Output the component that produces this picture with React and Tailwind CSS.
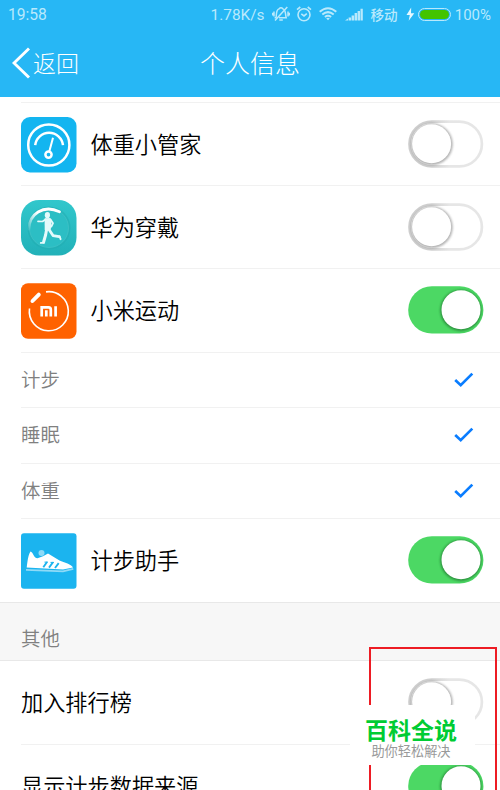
import React from "react";

const CJK = "font-['Noto_Sans_CJK_SC',sans-serif]";

function Toggle({ on }) {
  return (
    <svg width="76" height="48" viewBox="0 0 76 48" className="mb-px shrink-0">
      <defs>
        <filter id="knobShadow" x="-20%" y="-20%" width="140%" height="140%">
          <feGaussianBlur stdDeviation="1.1" />
        </filter>
        <linearGradient id="trackShade" x1="0" y1="0" x2="1" y2="0">
          <stop offset="0" stopColor="#cfcfcf" />
          <stop offset=".3" stopColor="#cfcfcf" />
          <stop offset=".55" stopColor="#e6e6e6" />
          <stop offset="1" stopColor="#e6e6e6" />
        </linearGradient>
      </defs>
      {on ? (
        <>
          <rect x="0.2" y="0.3" width="75.2" height="47.3" rx="23.65" fill="#4cd864" />
          <circle cx="52.8" cy="24.3" r="20.6" fill="#247a32" opacity=".75" filter="url(#knobShadow)" />
          <circle cx="53" cy="23.8" r="19.5" fill="#fff" />
        </>
      ) : (
        <>
          <rect x="1.5" y="1.6" width="72.4" height="44.8" rx="22.4" fill="#fff" stroke="url(#trackShade)" strokeWidth="2.7" />
          <circle cx="23.8" cy="24.2" r="20.9" fill="#888" opacity=".65" filter="url(#knobShadow)" />
          <circle cx="23.6" cy="23.8" r="19.5" fill="#fff" />
        </>
      )}
    </svg>
  );
}

function Check() {
  return (
    <svg width="20" height="16" viewBox="0 0 20 16" className="mb-px mr-[10px]">
      <path d="M1.2 8.1 L6.7 13.2 L18.3 1.6" fill="none" stroke="#0a7dff" strokeWidth="2.7" />
    </svg>
  );
}

function ScaleIcon() {
  return (
    <svg width="56" height="56" viewBox="0 0 56 56" className="mt-px">
      <rect width="55.5" height="55.5" rx="9" fill="#13b5f0" />
      <g fill="none" stroke="#fff" strokeWidth="2.5">
        <circle cx="27.8" cy="28" r="20.6" />
        <path d="M14.2 28.2 A14 14 0 0 1 42 28.2" />
        <circle cx="27.5" cy="37.6" r="3.1" />
        <path d="M28.3 34.5 L32 20.8" strokeWidth="2" />
      </g>
    </svg>
  );
}

function RunnerIcon() {
  return (
    <svg width="56" height="56" viewBox="0 0 56 56" className="mt-px">
      <defs>
        <linearGradient id="teal" x1="0" y1="0" x2="0" y2="1">
          <stop offset="0" stopColor="#31c7cc" />
          <stop offset="1" stopColor="#22b1b8" />
        </linearGradient>
        <linearGradient id="ring" x1="0" y1="1" x2="1" y2="0">
          <stop offset="0" stopColor="#fff" stopOpacity=".1" />
          <stop offset=".55" stopColor="#fff" />
        </linearGradient>
      </defs>
      <rect width="55.5" height="55.5" rx="18" fill="url(#teal)" />
      <circle cx="28" cy="28" r="21.5" fill="#22adb3" opacity=".6" />
      <circle cx="28" cy="28" r="19.5" fill="#2cbec4" stroke="#48c5ca" strokeWidth=".6" />
      <path d="M8 29 C8 14.5 22 4 38.5 11.7" fill="none" stroke="url(#ring)" strokeWidth="2.8" strokeLinecap="round" />
      <g fill="#e4fafb">
        <ellipse cx="26.4" cy="15.2" rx="2.6" ry="3.1" />
        <path d="M23.6 18.3 L29.2 18 L30.6 20.5 L29.8 29.5 L23.7 30 Z" />
      </g>
      <g fill="none" stroke="#e4fafb" strokeLinejoin="round" strokeLinecap="round">
        <path d="M24.5 19.5 L21.5 21.5 L17 21.3" strokeWidth="1.7" />
        <path d="M29.5 19.5 L32 23.2 L30.3 26.6" strokeWidth="1.9" />
        <path d="M25.6 29.5 L24.6 35 L22.6 42" strokeWidth="3" />
        <path d="M28 29.5 L32 35.6 L38.2 36.6" strokeWidth="2.8" />
        <path d="M38.6 36.5 L39.6 39.2 M22.8 42.9 H19.8" strokeWidth="1.9" />
      </g>
    </svg>
  );
}

function MiIcon() {
  return (
    <svg width="56" height="56" viewBox="0 0 56 56">
      <rect y=".3" width="55.5" height="55.5" rx="7" fill="#ff6200" />
      <g fill="none" stroke="#fff">
        <path d="M25 8.9 A19.5 19.5 0 1 1 8.5 25.5" strokeWidth="1.6" />
        <path d="M11.5 18 L17.8 11.6" strokeWidth="3.9" strokeLinecap="round" />
        <path d="M20.7 33.4 V24.4 H27.5 Q29.8 24.4 29.8 26.8 V33.4 M25.3 27.2 V33.4 M34.6 23.3 V33.4" strokeWidth="2.7" />
      </g>
    </svg>
  );
}

function ShoeIcon() {
  return (
    <svg width="56" height="56" viewBox="0 0 56 56" className="mt-px">
      <rect y=".2" width="55.5" height="55.5" rx="3" fill="#1bb4ef" />
      <circle cx="20.5" cy="20" r="3" fill="#8edaf7" />
      <path d="M9.5 18.5 C7 22 6.5 29 5.7 34.5 L42 36.5 L52 34.5 C51 31.5 43 29.2 38.5 27.5 L27 20.5 L22 23.3 L16.5 25.3 C12.5 24.8 12.2 19.3 9.5 18.5 Z" fill="#fff" />
      <path d="M5 36.8 L42 38.3 L52.3 35.8" fill="none" stroke="#8edaf7" strokeWidth="1.8" />
      <path d="M22.3 34.2 L26 29 M28 34.6 L32 29.3 M34 35 L37.7 30.2" stroke="#1bb4ef" strokeWidth="1.9" fill="none" />
      <path d="M23.5 29.1 H27 M29.5 29.4 H33" stroke="#1bb4ef" strokeWidth="1" />
    </svg>
  );
}

function Row({ icon, label, on, size }) {
  return (
    <div className={`ml-[21px] flex items-center border-t border-[#f1f1f1] pr-4 ${size}`}>
      {icon}
      <span className={`mb-[3px] flex-1 whitespace-nowrap text-[22.2px] font-[350] leading-[32px] text-black ${icon ? "pl-[13.5px]" : ""}`}>{label}</span>
      <Toggle on={on} />
    </div>
  );
}

function CheckRow({ label, size }) {
  return (
    <div className={`ml-[21px] flex items-center justify-between border-t border-[#f1f1f1] pr-4 ${size}`}>
      <span className="mb-[3px] text-[19.4px] font-[350] leading-7 text-[#808080]">{label}</span>
      <Check />
    </div>
  );
}

function StatusBar() {
  return (
    <div className="flex h-[29px] items-center pl-[8px] pr-[9px] text-[#b9e9fc]">
      <span className="font-[Roboto,sans-serif] text-[15.6px] leading-5">19:58</span>
      <span className="ml-auto font-[Roboto,sans-serif] text-[15.4px] leading-5">1.78K/s</span>
      <svg width="18" height="18" viewBox="0 0 18 18" className="mb-[2px] ml-[7px]" fill="none" stroke="currentColor" strokeWidth="1.5">
        <path d="M2.6 12.8 H4 C4.8 9 3.8 5 7 3.9 Q9 1.5 11 3.9 C14 5 13.2 9 14.2 12.8 H7 M7.3 15 H10.8" />
        <path d="M15.3 2 L3 15.5 M2 6.4 V11.5 M16 6.4 V11.5 M.7 7.8 V10.6 M17.3 7.8 V10.6" />
      </svg>
      <svg width="16" height="18" viewBox="0 0 16 18" className="mb-[2px] ml-[6px]" fill="none" stroke="currentColor" strokeWidth="1.6">
        <circle cx="8" cy="9.8" r="6" />
        <path d="M1 4.6 L4.3 2 M11.7 2 L15 4.6 M5.3 8.9 L8 10.9 L10.8 8.7" />
      </svg>
      <svg width="18" height="14" viewBox="0 0 18 14" className="mb-px ml-[7px]" fill="none" stroke="currentColor" strokeWidth="2">
        <path d="M.7 4.8 Q9 -2.3 17.3 4.8 M3.3 7.5 Q9 2.7 14.7 7.5 M5.9 10 Q9 7.6 12.1 10" />
        <path d="M7.2 11.2 L9 13.3 L10.8 11.2 Q9 10.1 7.2 11.2 Z" fill="currentColor" stroke="none" />
      </svg>
      <svg width="18" height="13" viewBox="0 0 18 13" className="ml-[8px]" fill="currentColor">
        <path d="M0 12.5 L3 10.5 V12.5 Z M3.6 9.5 H6.1 V12.5 H3.6 Z M6.6 7.4 H9.1 V12.5 H6.6 Z M9.6 5 H12.1 V12.5 H9.6 Z M12.6 3 H15 V12.5 H12.6 Z M15.5 .7 H17.8 V12.5 H15.5 Z" />
      </svg>
      <span className="mb-[2px] ml-[8px] text-[13.6px] font-medium leading-5">移动</span>
      <svg width="9" height="15" viewBox="0 0 9 15" className="ml-[8px]" fill="#e5f8ff">
        <path d="M5.2 .6 L.5 8 H3.8 L2.7 13.8 L8.3 6.2 H5 Z" />
      </svg>
      <div className="mb-px ml-[3px] h-[13px] w-[33px] rounded-full border-[1.5px] border-[#b9e9fc] p-px">
        <div className="h-full rounded-full bg-[#43c400]" />
      </div>
      <span className="ml-[4px] font-[Roboto,sans-serif] text-[15px] leading-5">100%</span>
    </div>
  );
}

export default function App() {
  return (
    <div className={`relative flex h-[790px] w-[500px] flex-col overflow-hidden bg-white ${CJK} *:shrink-0`}>
      <header className="h-[97px] bg-[#27b7f5] text-white">
        <StatusBar />
        <div className="grid h-[68px] grid-cols-[1fr_auto_1fr] items-center">
          <div className="flex items-center pl-3">
            <svg width="19" height="32" viewBox="0 0 19 32" fill="none" stroke="white" strokeWidth="2.9">
              <path d="M17 1.5 L2 16 L17 30.5" />
            </svg>
            <span className="mb-[2px] ml-[2px] text-[23px] font-light leading-8">返回</span>
          </div>
          <h1 className="mb-[2px] text-[25px] font-light leading-8">个人信息</h1>
          <div />
        </div>
      </header>
      <main className="pt-[5px]">
        <Row icon={<ScaleIcon />} label="体重小管家" size="h-[83px]" />
        <Row icon={<RunnerIcon />} label="华为穿戴" size="h-[83px]" />
        <Row icon={<MiIcon />} label="小米运动" on size="h-[84px]" />
        <CheckRow label="计步" size="h-[55px]" />
        <CheckRow label="睡眠" size="h-[56px]" />
        <CheckRow label="体重" size="h-[55px]" />
        <Row icon={<ShoeIcon />} label="计步助手" on size="h-[84px]" />
        <h2 className="flex h-[59px] items-center border-y border-[#e8e8e8] bg-[#f7f7f7] pl-[21px] pt-[13px] text-[19.4px] font-[350] leading-7 text-[#808080]">其他</h2>
        <Row label="加入排行榜" size="h-[83px] border-t-0" />
        <Row label="显示计步数据来源" on size="h-[83px]" />
      </main>
      <div className="absolute left-[369px] top-[647px] h-[160px] w-[128px] border-2 border-[#ed1c24]" />
      <div className="absolute left-[350px] top-[705px] flex h-[60px] w-[125px] flex-col items-center bg-white pr-[3px] pt-[10px]">
        <span className="text-[23px] font-bold leading-[29px] text-[#00cc33]">百科全说</span>
        <span className="text-[13.2px] leading-[14px] text-[#999]">助你轻松解决</span>
      </div>
    </div>
  );
}
